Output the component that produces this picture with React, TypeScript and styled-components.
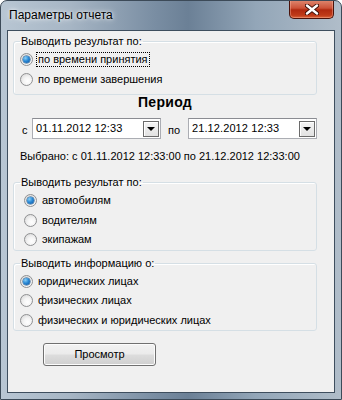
import React from 'react';
import styled, { createGlobalStyle } from 'styled-components';

const GlobalStyle = createGlobalStyle`
  html, body {
    margin: 0;
    padding: 0;
    background: #ffffff;
  }
  body {
    font-family: Tahoma, "Liberation Sans", "DejaVu Sans", sans-serif;
    font-size: 11px;
    color: #000;
  }
`;

const Window = styled.div`
  width: 342px;
  height: 400px;
  box-sizing: border-box;
  border-radius: 7px 7px 0 0;
  border: 1px solid #3c4a58;
  background:
    linear-gradient(90deg,
      #b8c6d3 0%, #a7b6c5 20%, #7a8ea3 45%, #6b8096 55%, #93a6b8 75%, #b0bdc9 100%);
  display: flex;
  flex-direction: column;
  overflow: hidden;
`;

const TitleBar = styled.div`
  height: 29px;
  flex-shrink: 0;
  display: flex;
  align-items: flex-start;
  justify-content: space-between;
  padding-left: 8px;
`;

const Title = styled.span`
  margin-top: 7px;
  font-family: "Liberation Sans", sans-serif;
  font-size: 12px;
  color: #000;
  text-shadow: 0 0 6px rgba(255, 255, 255, 0.9), 0 0 3px rgba(255, 255, 255, 0.8);
`;

const CloseButton = styled.div`
  width: 45px;
  height: 19px;
  margin-right: 7px;
  margin-top: -1px;
  box-sizing: border-box;
  border: 1px solid #4a120a;
  border-top: none;
  border-radius: 0 0 5px 5px;
  background: linear-gradient(180deg, #e08a72 0%, #cc5238 45%, #b0290f 55%, #bf3a18 85%, #d9643a 100%);
  box-shadow: inset 0 0 0 1px rgba(255, 190, 170, 0.4);
  display: flex;
  align-items: center;
  justify-content: center;
`;

const Client = styled.div`
  flex: 1;
  margin: 0 6px 6px 6px;
  border: 1px solid #3e4e5e;
  background: #f0f0f0;
  padding: 4px 17px 0 5px;
  display: flex;
  flex-direction: column;
  overflow: hidden;
`;

const Group = styled.fieldset<{ $pad: number }>`
  margin: 0;
  padding: 2px 6px ${p => p.$pad}px 6px;
  border: 1px solid #d5dfe5;
  border-radius: 3px;
  box-shadow: inset 1px 1px 0 #ffffff;
  display: flex;
  flex-direction: column;
  flex-shrink: 0;
`;

const Legend = styled.legend`
  padding: 0 1px;
  margin-left: 0;
  line-height: 13px;
`;

const OptionRow = styled.label<{ $indent: number }>`
  height: 19.5px;
  display: flex;
  align-items: center;
  padding-left: ${p => p.$indent}px;
  gap: 3px;
`;

const RadioDot = styled.span<{ $on: boolean }>`
  width: 13px;
  height: 13px;
  box-sizing: border-box;
  border-radius: 50%;
  border: 1px solid #8f9092;
  background: radial-gradient(circle at 60% 65%, #ffffff 0%, #f4f4f4 40%, #d2d2d2 100%);
  display: flex;
  align-items: center;
  justify-content: center;
  flex-shrink: 0;

  &::after {
    content: '';
    display: ${p => (p.$on ? 'block' : 'none')};
    width: 7px;
    height: 7px;
    border-radius: 50%;
    background: radial-gradient(circle at 35% 30%, #8ad0f7 0%, #2b8ad6 45%, #0b4f9a 100%);
    box-shadow: 0 0 0 0.5px #1c5180;
  }
`;

const OptionText = styled.span<{ $focus?: boolean }>`
  padding: 0 1px;
  line-height: 13px;
  border: 1px dotted ${p => (p.$focus ? '#000' : 'transparent')};
`;

const PeriodTitle = styled.div`
  margin-top: 0;
  text-align: center;
  font-family: "Liberation Sans", sans-serif;
  font-weight: bold;
  font-size: 14px;
  line-height: 15px;
  letter-spacing: 0.3px;
`;

const DateRow = styled.div`
  margin-top: 8px;
  display: flex;
  align-items: center;
  padding-left: 9px;
`;

const DateLabel = styled.span<{ $w: number; $pl?: number }>`
  width: ${p => p.$w}px;
  box-sizing: border-box;
  padding-left: ${p => p.$pl ?? 0}px;
  padding-top: 3px;
`;

const Combo = styled.div`
  width: 129px;
  height: 21px;
  box-sizing: border-box;
  border: 1px solid #abadb3;
  border-top-color: #8a8c92;
  background: #fff;
  display: flex;
  align-items: center;
  justify-content: space-between;
  padding: 0 1px 0 3px;
`;

const ComboText = styled.span`
  font-size: 11px;
  letter-spacing: 0.1px;
  padding-bottom: 2px;
`;

const DropButton = styled.span`
  width: 16px;
  height: 16px;
  box-sizing: border-box;
  border: 1px solid #6b6b6b;
  background: linear-gradient(180deg, #f4f4f4 0%, #e2e2e2 100%);
  box-shadow: inset 1px 1px 0 #fff;
  display: flex;
  align-items: center;
  justify-content: center;

  &::after {
    content: '';
    width: 0;
    height: 0;
    border-left: 4px solid transparent;
    border-right: 4px solid transparent;
    border-top: 4px solid #000;
    margin-top: 1px;
  }
`;

const Selected = styled.div`
  margin-top: 11px;
  padding-left: 7px;
  line-height: 13px;
  margin-bottom: 13px;
`;

const Spacer = styled.div<{ $h: number }>`
  height: ${p => p.$h}px;
  flex-shrink: 0;
`;

const Footer = styled.div`
  margin-top: 12px;
  padding-left: 30px;
`;

const ViewButton = styled.button`
  width: 113px;
  height: 23px;
  box-sizing: border-box;
  border: 1px solid #707070;
  border-radius: 3px;
  background: linear-gradient(180deg, #f2f2f2 0%, #ebebeb 48%, #dddddd 52%, #cfcfcf 100%);
  box-shadow: inset 0 0 0 1px #fcfcfc;
  font-family: inherit;
  font-size: 11px;
  color: #000;
  padding: 0 0 2px 0;
`;

const CloseIcon = () => (
  <svg width="14" height="11" viewBox="0 0 14 11">
    <path d="M2 1.5 L12 9.5 M12 1.5 L2 9.5" stroke="#3a0d06" strokeWidth="4.2" strokeLinecap="round" />
    <path d="M2 1.5 L12 9.5 M12 1.5 L2 9.5" stroke="#ffffff" strokeWidth="2.4" strokeLinecap="round" />
  </svg>
);

type Opt = { text: string; on?: boolean; focus?: boolean };

const Options = ({ items, indent }: { items: Opt[]; indent: number }) => (
  <>
    {items.map(o => (
      <OptionRow key={o.text} $indent={indent}>
        <RadioDot $on={!!o.on} />
        <OptionText $focus={o.focus}>{o.text}</OptionText>
      </OptionRow>
    ))}
  </>
);

export default function App() {
  return (
    <>
      <GlobalStyle />
      <Window>
        <TitleBar>
          <Title>Параметры отчета</Title>
          <CloseButton>
            <CloseIcon />
          </CloseButton>
        </TitleBar>
        <Client>
          <Group $pad={5}>
            <Legend>Выводить результат по:</Legend>
            <Options
              indent={0}
              items={[
                { text: 'по времени принятия', on: true, focus: true },
                { text: 'по времени завершения' },
              ]}
            />
          </Group>

          <PeriodTitle>Период</PeriodTitle>

          <DateRow>
            <DateLabel $w={10}>с</DateLabel>
            <Combo>
              <ComboText>01.11.2012 12:33</ComboText>
              <DropButton />
            </Combo>
            <DateLabel $w={27} $pl={7}>по</DateLabel>
            <Combo>
              <ComboText>21.12.2012 12:33</ComboText>
              <DropButton />
            </Combo>
          </DateRow>

          <Selected>Выбрано: с 01.11.2012 12:33:00 по 21.12.2012 12:33:00</Selected>

          <Group $pad={0}>
            <Legend>Выводить результат по:</Legend>
            <Options
              indent={4}
              items={[{ text: 'автомобилям', on: true }, { text: 'водителям' }, { text: 'экипажам' }]}
            />
          </Group>

          <Spacer $h={6} />

          <Group $pad={0}>
            <Legend>Выводить информацию о:</Legend>
            <Options
              indent={0}
              items={[
                { text: 'юридических лицах', on: true },
                { text: 'физических лицах' },
                { text: 'физических и юридических лицах' },
              ]}
            />
          </Group>

          <Footer>
            <ViewButton>Просмотр</ViewButton>
          </Footer>
        </Client>
      </Window>
    </>
  );
}
